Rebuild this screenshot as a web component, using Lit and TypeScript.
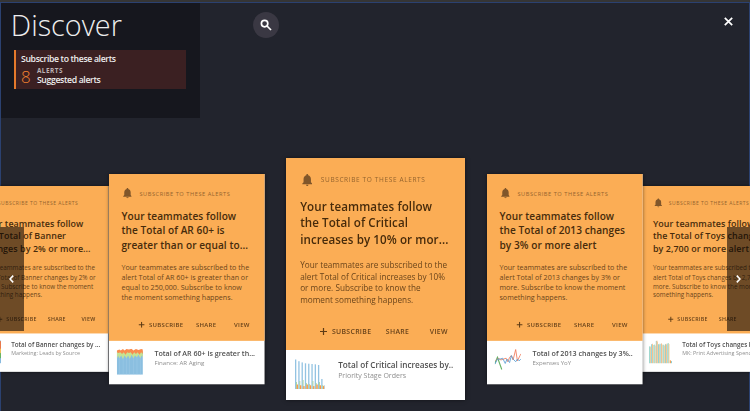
import { LitElement, html, css, svg } from "lit";
import { customElement, property } from "lit/decorators.js";
import { styleMap } from "lit/directives/style-map.js";

interface Alert {
  title: string[];
  body: string[];
  name: string;
  source: string;
  chart: string;
  scale: number;
  level: string;
}

const alerts: Alert[] = [
  {
    title: ["Your teammates follow", "the Total of Banner", "changes by 2% or more..."],
    body: ["Your teammates are subscribed to the", "alert Total of Banner changes by 2% or", "more. Subscribe to know the moment", "something happens."],
    name: "Total of Banner changes by ...",
    source: "Marketing: Leads by Source",
    chart: "stack",
    scale: 0.768,
    level: "far",
  },
  {
    title: ["Your teammates follow", "the Total of AR 60+ is", "greater than or equal to..."],
    body: ["Your teammates are subscribed to the", "alert Total of AR 60+ is greater than or", "equal to 250,000. Subscribe to know", "the moment something happens."],
    name: "Total of AR 60+ is greater th...",
    source: "Finance: AR Aging",
    chart: "area",
    scale: 0.869,
    level: "near",
  },
  {
    title: ["Your teammates follow", "the Total of Critical", "increases by 10% or mor..."],
    body: ["Your teammates are subscribed to the", "alert Total of Critical increases by 10%", "or more. Subscribe to know the", "moment something happens."],
    name: "Total of Critical increases by..",
    source: "Priority Stage Orders",
    chart: "bars",
    scale: 1,
    level: "center",
  },
  {
    title: ["Your teammates follow", "the Total of 2013 changes", "by 3% or more alert"],
    body: ["Your teammates are subscribed to the", "alert Total of 2013 changes by 3% or", "more. Subscribe to know the moment", "something happens."],
    name: "Total of 2013 changes by 3%..",
    source: "Expenses YoY",
    chart: "lines",
    scale: 0.869,
    level: "near",
  },
  {
    title: ["Your teammates follow", "the Total of Toys changes", "by 2,700 or more alert"],
    body: ["Your teammates are subscribed to the", "alert Total of Toys changes by 2,700", "more. Subscribe to know the moment", "something happens."],
    name: "Total of Toys changes by 2,...",
    source: "MK: Print Advertising Spend",
    chart: "groups",
    scale: 0.768,
    level: "far",
  },
];

const bar = (x: number, y: number, w: number, h: number, fill: string) =>
  svg`<rect x=${x} y=${y} width=${w} height=${h} fill=${fill}></rect>`;

const charts: Record<string, () => unknown> = {
  stack: () => svg`
    ${bar(0, 0, 30, 30, "#7db4dc")}
    <path d="M0 2L4 0 9 3 14 0 20 2 25 0 30 1V12H0Z" fill="#f4733c"/>
    <path d="M0 10L6 8 12 12 18 9 24 10 30 11V21L24 18 18 22 12 19 6 21 0 19Z" fill="#fbc24f"/>
    <path d="M0 20L6 17 12 21 18 18 24 20 30 16V23L24 26 18 22 12 25 6 22 0 25Z" fill="#5eb45e"/>`,
  area: () => svg`
    ${bar(0, 3, 30, 27, "#8bbfe0")}
    ${[3, 7, 11, 14, 19, 23, 27].map((x) => bar(x, 8, 0.4, 22, "#a5cfe8"))}
    <path d="M0 3H30V10L28.500 8 27 11 25 7 23 10 21 8 19 11 17 7 15 12 13 8 11 11 9 8 7 12 5 8 3 11 1.500 8 0 12Z" fill="#c5e394"/>
    <path d="M0 2L3 1 4.500 2 7 .5 9 2 11 .3 14 1 17 .2 19 2 22 .5 25 1.500 28 .5 30 1V6L28 4 26 7 24 4 22 6 20 4 18 7 16 4 14 5 12 4 10 7 8 4 6 6 4 4 2 5 0 4Z" fill="#fa8c4f"/>`,
  bars: () => svg`
    ${[0.5, 2.2, 3.4, 4.3, 4.7, 5, 5.3, 6, 20, 26].map((y, i) => [
      bar(i * 3.28, y, 1.3, 30 - y, "#93c3e2"),
      bar(i * 3.28 + 1.1, i < 8 ? [23, 22, 21, 24, 25, 22, 24, 23][i] : 26, 0.9, i < 8 ? [7, 8, 9, 6, 5, 8, 6, 7][i] : 4, "#a8d69c"),
      i < 9 ? bar(i * 3.28 + 1.7, 25.5 + (i % 3) * 0.8, 1.4, 4.5 - (i % 3) * 0.8, "#fa9a48") : null,
    ])}`,
  lines: () => svg`
    <g fill="none" stroke-width="1">
      <path d="M0 17L3 10 8 24" stroke="#67b267" stroke-width="1.300"/>
      <path d="M1 14L4 11 7 13 10 12 13 11 15 15 17 10 19 8 21 13 24 1 26 14 29 8 30 6" stroke="#f07b5c"/>
      <path d="M0 18L3 12 6 12 9 11 12 17 14 12 17 16 19 8 21 12 24 15 26 12 28 14 30 12" stroke="#5a9fd4"/>
    </g>`,
  groups: () => svg`
    ${[8, 5, 6, 0.8, 5, 4.5, 6, 5, 4].map((y, i) => [
      bar(i * 3, y, 1.1, 30 - y, "#7ecbd3"),
      bar(i * 3 + 1, y - 0.6, 0.9, 30.6 - y, i % 2 ? "#f9b069" : "#a9d9b2"),
      bar(i * 3 + 1.8, y + 0.8, 0.8, 29.2 - y, "#f3ba7d"),
    ])}
    ${bar(27.2, 26, 1.6, 4, "#f3a25a")}${bar(28.8, 27, 1.3, 3, "#7ecbd3")}`,
};

@customElement("alert-card")
class AlertCard extends LitElement {
  @property({ attribute: false }) alert!: Alert;

  static styles = css`
    :host { display: block; width: 179px; height: 242px; transform-origin: 0 0; }
    .card { display: flex; flex-direction: column; width: 179px; height: 242px; background: #fff; box-shadow: 0 0 4px rgba(0, 0, 0, .5); white-space: nowrap; }
    .top { box-sizing: border-box; height: 192px; padding: 13.500px 14.300px 0; background: #fbad55; display: flex; flex-direction: column; }
    .kind { display: flex; align-items: center; height: 17px; gap: 8.700px; padding-left: 1.500px; font-size: 6.500px; letter-spacing: .63px; color: #95642e; }
    .bell { width: 10.500px; height: 12px; fill: #80562a; }
    .title { margin-top: 10.500px; font-size: 11.600px; line-height: 16.400px; font-weight: 600; letter-spacing: .08px; color: #472b0b; }
    .body { margin-top: 10.800px; font-size: 8.200px; line-height: 11.750px; letter-spacing: .02px; color: #6b451b; }
    .actions { display: flex; align-items: center; justify-content: flex-end; height: 12px; margin-top: 19.500px; padding-right: 2.700px; gap: 14.500px; font-size: 6.900px; letter-spacing: .33px; font-weight: 600; color: #67421a; }
    .view { margin-left: 6px; }
    .sub { display: flex; align-items: center; gap: 5px; }
    .plus { width: 7px; height: 7px; stroke: #5d3b15; stroke-width: 1.200; }
    .bottom { height: 50px; display: flex; padding: 9px 0 0 9px; box-sizing: border-box; gap: 13.300px; }
    .chart { width: 30px; height: 30px; }
    .name { font-size: 8.200px; line-height: 12px; font-weight: 600; color: #505050; }
    .source { font-size: 7px; line-height: 10px; color: #8f8f8f; }
  `;

  render() {
    const a = this.alert;
    return html`<article class="card">
      <div class="top">
        <div class="kind">
          <svg class="bell" viewBox="4 2.500 16 19.500"><path d="M12 22c1.100 0 2-.9 2-2h-4c0 1.100.9 2 2 2zm6-6v-5c0-3.070-1.640-5.640-4.500-6.320V4c0-.83-.67-1.500-1.500-1.500s-1.500.67-1.500 1.500v.68C7.630 5.360 6 7.920 6 11v5l-2 2v1h16v-1l-2-2z"/></svg>
          <span>SUBSCRIBE TO THESE ALERTS</span>
        </div>
        <div class="title">${a.title.map((l) => html`<div>${l}</div>`)}</div>
        <div class="body">${a.body.map((l) => html`<div>${l}</div>`)}</div>
        <div class="actions">
          <span class="sub"><svg class="plus" viewBox="0 0 7 7"><path d="M3.500 0V7M0 3.500H7"/></svg>SUBSCRIBE</span>
          <span>SHARE</span><span class="view">VIEW</span>
        </div>
      </div>
      <div class="bottom">
        <svg class="chart" viewBox="0 0 30 30">${charts[a.chart]()}</svg>
        <div><div class="name">${a.name}</div><div class="source">${a.source}</div></div>
      </div>
    </article>`;
  }
}

@customElement("app-root")
class AppRoot extends LitElement {
  static styles = css`
    :host { display: block; width: 750px; height: 411px; overflow: hidden; font-family: "Open Sans", "Liberation Sans", sans-serif; }
    .page { position: relative; box-sizing: border-box; width: 750px; height: 411px; background: #22242d; border-top: 2px solid #353535; overflow: hidden; }
    .frame { position: absolute; inset: 0; border: 1px solid #2b4170; border-bottom: 0; }
    .head { position: relative; display: flex; height: 116px; }
    .panel { box-sizing: border-box; width: 200px; height: 116px; padding: 0 14px; background: rgba(18, 18, 25, .72); border-top: 1px solid #2b4170; border-left: 1px solid #2b4170; }
    .heading { margin: -2px 0 0 -4.200px; height: 49px; font-size: 28.800px; line-height: 47px; font-weight: 300; color: #eee; }
    .box { box-sizing: border-box; width: 172px; height: 39px; margin-left: -1px; background: #3b2022; border-left: 2px solid #e5792b; padding: 3px 0 0 5px; color: #eee; white-space: nowrap; }
    .lead, .suggest { font-size: 8.700px; line-height: 13px; font-weight: 600; letter-spacing: -.35px; }
    .row { display: flex; gap: 6.200px; }
    .count { font-size: 17px; line-height: 22px; font-weight: 300; color: #f08030; }
    .tag { font-size: 6.400px; line-height: 9px; font-weight: 700; letter-spacing: .5px; color: #bdb3b4; }
    .suggest { line-height: 11px; }
    .tools { flex: 1; display: flex; justify-content: space-between; align-items: flex-start; padding: 10px 17px 0 53px; }
    .search { display: flex; align-items: center; justify-content: center; width: 26px; height: 26px; border-radius: 50%; background: #3a3843; }
    .search svg { width: 12px; height: 12px; }
    .close { width: 9px; height: 9px; margin-top: 5px; }
    svg { fill: none; stroke: #fff; }
    .deck { position: relative; display: flex; align-items: center; width: 807px; height: 242px; margin: 39.800px 0 0 -28.700px; }
    .slot { flex: none; position: relative; }
    .near { z-index: 1; }
    .center { z-index: 2; margin: 0 21.800px 0 21.500px; }
    .nav { position: absolute; z-index: 3; top: 225px; width: 23.500px; height: 104px; background: rgba(8, 6, 6, .58); display: flex; align-items: center; justify-content: center; }
    .nav svg { width: 5px; height: 8px; stroke-width: 1.600; }
    .prev { left: 0; }
    .next { right: 0; }
  `;

  render() {
    return html`<main class="page">
      <div class="frame"></div>
      <header class="head">
        <section class="panel">
          <div class="heading">Discover</div>
          <div class="box">
            <div class="lead">Subscribe to these alerts</div>
            <div class="row">
              <span class="count">8</span>
              <div><div class="tag">ALERTS</div><div class="suggest">Suggested alerts</div></div>
            </div>
          </div>
        </section>
        <div class="tools">
          <div class="search"><svg viewBox="0 0 12 12" stroke-width="1.700"><circle cx="4.600" cy="4.600" r="3.200"/><path d="M7 7L11 11"/></svg></div>
          <svg class="close" viewBox="0 0 9 9" stroke-width="1.700"><path d="M.8.8L8.200 8.200M8.200.8L.8 8.200"/></svg>
        </div>
      </header>
      <section class="deck">
        ${alerts.map((a) => html`<div class="slot ${a.level}" style=${styleMap({ width: `${179 * a.scale}px`, height: `${242 * a.scale}px` })}>
          <alert-card .alert=${a} style=${styleMap({ transform: `scale(${a.scale})` })}></alert-card>
        </div>`)}
      </section>
      <div class="nav prev"><svg viewBox="0 0 5 8"><path d="M4.200.6L1 4 4.200 7.400"/></svg></div>
      <div class="nav next"><svg viewBox="0 0 5 8"><path d="M.8.6L4 4 .8 7.400"/></svg></div>
    </main>`;
  }
}
